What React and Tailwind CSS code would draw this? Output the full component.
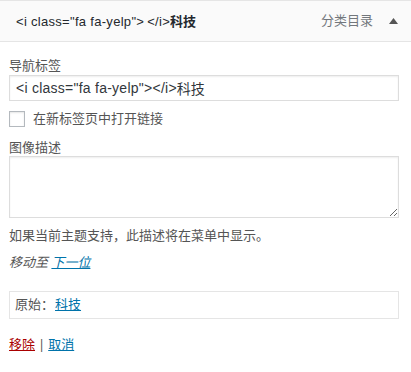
import React from "react";

export default function App() {
  const font = { fontFamily: '"Noto Sans", "Noto Sans CJK SC", sans-serif' };
  const latin = { fontFamily: '"Liberation Sans", "Noto Sans CJK SC", sans-serif' };
  return (
    <div className="w-[411px] h-[372px] bg-white text-[13px] text-[#32373c]" style={font}>
      <div className="border-t border-b border-[#e5e5e5] bg-[#fafafa] h-[42px] flex items-center pl-[16px] pr-[13px]">
        <div className="flex-1 text-[13px] text-[#23282d] leading-[18px] pt-[1px]">
          <span className="tracking-[0.3px]" style={latin}>{'<i class="fa fa-yelp">'}</span>
          <span className="tracking-[0.3px] ml-[3px]" style={latin}>{"</i>"}</span>
          <span className="font-bold">科技</span>
        </div>
        <div className="text-[13px] text-[#72777c] mr-[16px]">分类目录</div>
        <svg width="9" height="6" viewBox="0 0 9 6" className="mb-[1px]">
          <path d="M4.5 0 L9 6 L0 6 Z" fill="#555" />
        </svg>
      </div>
      <div className="pl-[9px] pr-[12px]">
        <div className="pt-[14px] leading-[19px] text-[#555]">导航标签</div>
        <div className="h-[26px] border border-[#ddd] flex items-center px-[6px] text-[#32373c] shadow-[inset_0_1px_2px_rgba(0,0,0,0.07)]">
          <span className="text-[14px] tracking-[0.25px]" style={latin}>{'<i class="fa fa-yelp"></i>'}</span>
          <span className="text-[14px]">科技</span>
        </div>
        <div className="flex items-center mt-[10px] h-[16px]">
          <div className="w-[16px] h-[16px] border border-[#b4b9be] shadow-[inset_0_1px_2px_rgba(0,0,0,0.1)]" />
          <span className="ml-[8px] text-[#555]">在新标签页中打开链接</span>
        </div>
        <div className="mt-[11px] leading-[18px] text-[#555]">图像描述</div>
        <textarea
          className="block w-full h-[62px] border border-[#ddd] shadow-[inset_0_1px_2px_rgba(0,0,0,0.07)] outline-none"
          style={{ resize: "vertical" }}
          defaultValue=""
        />
        <div className="mt-[8px] leading-[18px] text-[#555]">如果当前主题支持，此描述将在菜单中显示。</div>
        <div className="mt-[9px] leading-[18px]">
          <span className="italic text-[#555]">移动至</span>{" "}
          <span className="italic text-[#0073aa] underline">下一位</span>
        </div>
        <div className="mt-[20px] h-[28px] border border-[#e5e5e5] flex items-center px-[5px]">
          <span className="text-[#555]">原始：</span>
          <span className="ml-[1px] text-[#0073aa] underline">科技</span>
        </div>
        <div className="mt-[16px] leading-[18px]">
          <span className="text-[#a00] underline">移除</span>
          <span className="text-[#555] mx-[3px]">|</span>
          <span className="text-[#0073aa] underline">取消</span>
        </div>
      </div>
    </div>
  );
}
